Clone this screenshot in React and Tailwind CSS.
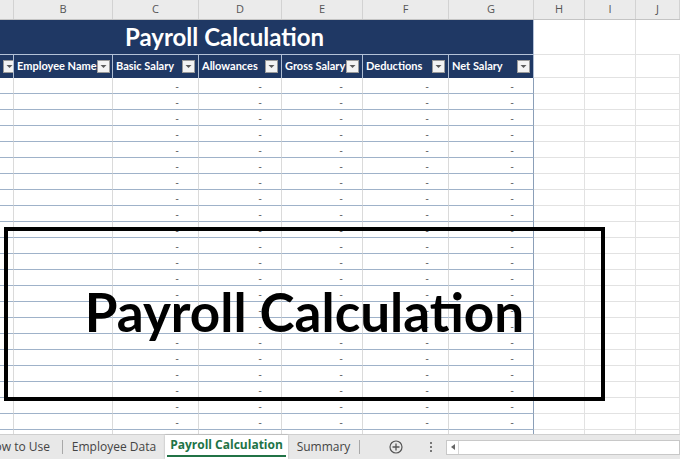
import React from 'react';

const W = ['w-[14px]', 'w-[99px]', 'w-[86px]', 'w-[83px]', 'w-[81px]', 'w-[86px]', 'w-[85px]', 'w-[51px]', 'w-[51px]', 'w-[44px]'];
const LETTERS = ['', 'B', 'C', 'D', 'E', 'F', 'G', 'H', 'I', 'J'];
const HEADERS = ['', 'Employee Name', 'Basic Salary', 'Allowances', 'Gross Salary', 'Deductions', 'Net Salary'];

function Dropdown() {
  return (
    <div className="w-[13px] h-[13px] shrink-0 bg-[#f3f3f3] border border-[#9a9a9a] flex items-center justify-center mr-[3px]">
      <svg width="7" height="5" viewBox="0 0 7 5">
        <path d="M0.5 1 L6.5 1 L3.5 4 Z" fill="#5a5a5a" />
      </svg>
    </div>
  );
}

function DataRow() {
  return (
    <div className="flex h-[16px] shrink-0">
      {W.map((w, i) => (
        <div
          key={i}
          className={`${w} shrink-0 h-full border-b border-r flex items-center justify-end overflow-hidden text-[10px] leading-none text-[#444] ${
            i < 7 ? 'border-b-[#9fb2c9]' : 'border-b-[#e2e2e2]'
          } ${i === 6 ? 'border-r-[#8b9fb8]' : i < 6 ? 'border-r-[#dadada]' : 'border-r-[#e2e2e2]'}`}
        >
          {i >= 2 && i <= 6 ? <span className="mr-[19px]">-</span> : null}
        </div>
      ))}
    </div>
  );
}

export default function App() {
  return (
    <div className="w-[680px] h-[459px] overflow-hidden bg-white flex flex-col relative font-['Lato',sans-serif]">
      {/* column letters */}
      <div className="flex h-[20px] shrink-0 bg-[#ebebeb] border-b border-[#c4c4c4]">
        {W.map((w, i) => (
          <div
            key={i}
            className={`${w} shrink-0 h-full border-r border-[#d2d2d2] flex items-center justify-center text-[11px] text-[#555] font-['Open_Sans',sans-serif]`}
          >
            {LETTERS[i]}
          </div>
        ))}
      </div>

      {/* title row */}
      <div className="flex h-[35px] shrink-0">
        <div className="w-[449px] shrink-0 bg-[#1f3864] border-b border-[#b4c2d8] flex items-center justify-center text-white font-bold text-[24px]">
          Payroll Calculation
        </div>
        <div className="w-[85px] shrink-0 bg-[#1f3864] border-b border-r border-[#b4c2d8]" />
        <div className="w-[51px] shrink-0 border-r border-b border-[#e2e2e2]" />
        <div className="w-[51px] shrink-0 border-r border-b border-[#e2e2e2]" />
        <div className="w-[44px] shrink-0 border-b border-[#e2e2e2]" />
      </div>

      {/* header row */}
      <div className="flex h-[23px] shrink-0">
        {W.map((w, i) =>
          i < 7 ? (
            <div
              key={i}
              className={`${w} shrink-0 h-full bg-[#1f3864] border-r border-[#aebdd3] flex items-center justify-between overflow-hidden pl-[3px] text-white font-bold text-[11px] whitespace-nowrap`}
            >
              <span>{HEADERS[i]}</span>
              <Dropdown />
            </div>
          ) : (
            <div key={i} className={`${w} shrink-0 h-full border-r border-b border-[#e2e2e2]`} />
          )
        )}
      </div>

      {/* data rows */}
      <div className="flex-1 overflow-hidden flex flex-col">
        {Array.from({ length: 23 }).map((_, r) => (
          <DataRow key={r} />
        ))}
      </div>

      {/* sheet tabs */}
      <div className="h-[25px] shrink-0 bg-[#e8e8e8] border-t border-[#cfcfcf] flex items-center text-[12px] text-[#444] font-['Open_Sans',sans-serif] whitespace-nowrap">
        <div className="w-[62px] shrink-0 flex justify-end pr-[12px] overflow-hidden">How to Use</div>
        <div className="w-px h-[14px] bg-[#a8a8a8] shrink-0" />
        <div className="w-[102px] shrink-0 text-center">Employee Data</div>
        <div className="w-[123px] shrink-0 h-full bg-white flex flex-col shadow-[0_0_2px_rgba(0,0,0,0.25)]">
          <div className="flex-1 flex items-center justify-center font-bold text-[#217346]">Payroll Calculation</div>
          <div className="h-[2px] mx-[2px] mb-[2px] bg-[#217346]" />
        </div>
        <div className="w-[71px] shrink-0 text-center">Summary</div>
        <div className="w-px h-[14px] bg-[#a8a8a8] shrink-0" />
        <div className="w-[86px] shrink-0 flex items-center">
          <svg width="14" height="14" viewBox="0 0 14 14" className="ml-[29px]">
            <circle cx="7" cy="7" r="6" fill="none" stroke="#555" strokeWidth="1.2" />
            <path d="M7 3.5 V10.5 M3.5 7 H10.5" stroke="#555" strokeWidth="1.3" />
          </svg>
          <div className="ml-[27px] flex flex-col gap-[2px]">
            <div className="w-[2px] h-[2px] bg-[#777]" />
            <div className="w-[2px] h-[2px] bg-[#777]" />
            <div className="w-[2px] h-[2px] bg-[#777]" />
          </div>
        </div>
        <div className="flex-1 h-[15px] bg-white border border-[#c8c8c8] flex">
          <div className="w-[12px] h-full border-r border-[#d6d6d6] flex items-center justify-center">
            <svg width="4" height="6" viewBox="0 0 4 6">
              <path d="M4 0 L0 3 L4 6 Z" fill="#666" />
            </svg>
          </div>
        </div>
      </div>

      {/* overlay box */}
      <div className="absolute left-[4px] top-[227px] w-[601px] h-[174px] border-[4px] border-black flex items-center justify-center">
        <span className="font-bold text-[53px] text-black leading-none mt-[-6px]">Payroll Calculation</span>
      </div>
    </div>
  );
}
